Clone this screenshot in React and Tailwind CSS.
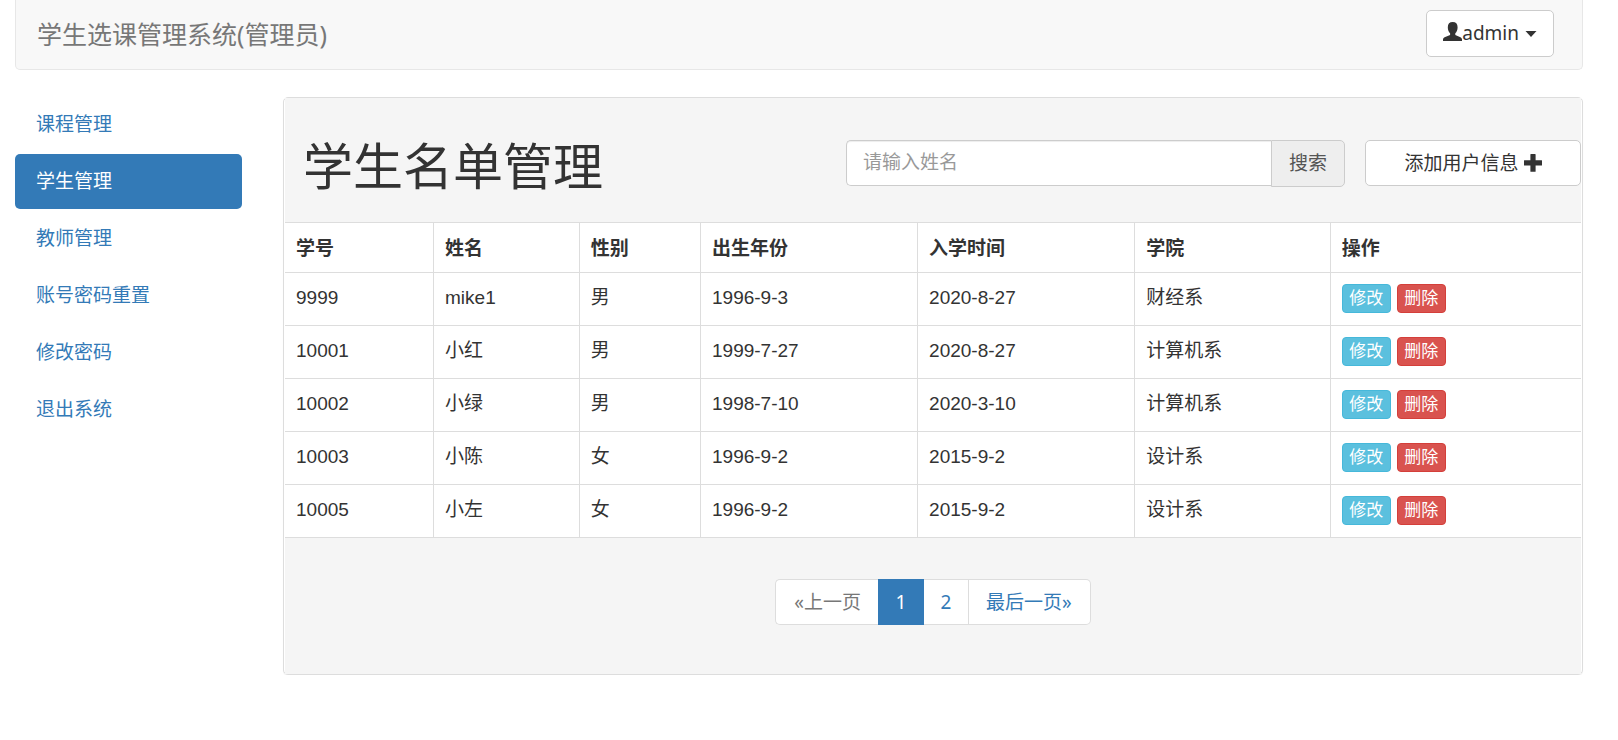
const NAV_ITEMS = ["课程管理", "学生管理", "教师管理", "账号密码重置", "修改密码", "退出系统"];

const COLUMNS = [
  { label: "学号", width: "w-[11.5%]" },
  { label: "姓名", width: "w-[11.25%]" },
  { label: "性别", width: "w-[9.35%]" },
  { label: "出生年份", width: "w-[16.75%]" },
  { label: "入学时间", width: "w-[16.75%]" },
  { label: "学院", width: "w-[15.1%]" },
  { label: "操作", width: "w-auto" },
];

const STUDENTS = [
  ["9999", "mike1", "男", "1996-9-3", "2020-8-27", "财经系"],
  ["10001", "小红", "男", "1999-7-27", "2020-8-27", "计算机系"],
  ["10002", "小绿", "男", "1998-7-10", "2020-3-10", "计算机系"],
  ["10003", "小陈", "女", "1996-9-2", "2015-9-2", "设计系"],
  ["10005", "小左", "女", "1996-9-2", "2015-9-2", "设计系"],
];

function UserIcon() {
  return (
    <svg viewBox="0 0 19 19" className="mb-1 h-[19px] w-[19px]" fill="currentColor" aria-hidden="true">
      <path d="M9.7 0C12.9 0 14.6 1.8 14.6 5.2C14.6 7.9 13.7 10 12.3 11.3V13L17.4 15.2C18.5 15.7 19 16.5 19 17.6V19H0V17.6C0 16.5.5 15.7 1.6 15.2L7.1 13V11.3C5.7 10 4.8 7.9 4.8 5.2C4.8 1.8 6.5 0 9.7 0Z" />
    </svg>
  );
}

function PlusIcon() {
  return (
    <svg viewBox="0 0 18 18" className="h-[18px] w-[18px]" fill="currentColor" aria-hidden="true">
      <path d="M6.8 0h4.4a.4.4 0 0 1 .4.4v5.8h6a.4.4 0 0 1 .4.4v4.6a.4.4 0 0 1-.4.4h-6v5.8a.4.4 0 0 1-.4.4H6.8a.4.4 0 0 1-.4-.4v-5.8h-6a.4.4 0 0 1-.4-.4V6.600a.4.4 0 0 1 .4-.4h6V.4A.4.4 0 0 1 6.800 0Z" />
    </svg>
  );
}

function Header() {
  return (
    <header className="flex h-[70px] items-start justify-between rounded-b-[5px] border border-t-0 border-[#e7e7e7] bg-[#f8f8f8] pt-2.5 pr-7 pl-[21px]">
      <a href="#" className="mt-1.5 font-['Noto_Sans','Noto_Sans_CJK_SC',sans-serif] text-[25px] leading-9 text-[#777]">
        学生选课管理系统(管理员)
      </a>
      <button
        type="button"
        className="flex h-[47px] items-center rounded-[5px] border border-[#ccc] bg-white px-4 font-['Noto_Sans',sans-serif]"
      >
        <UserIcon />
        admin
        <svg viewBox="0 0 12 6" className="ml-[6px] h-[6px] w-[12px]" fill="currentColor" aria-hidden="true">
          <path d="M.5 0h11L6 6Z" />
        </svg>
      </button>
    </header>
  );
}

function Sidebar() {
  return (
    <nav className="flex w-[227px] shrink-0 flex-col gap-0.5">
      {NAV_ITEMS.map((item) => (
        <a
          key={item}
          href="#"
          className={
            item === "学生管理"
              ? "rounded-[5px] bg-[#337ab7] px-[21px] py-[14px] text-white"
              : "rounded-[5px] px-[21px] py-[14px] text-[#337ab7]"
          }
        >
          {item}
        </a>
      ))}
    </nav>
  );
}

function PanelHeading() {
  return (
    <div className="flex h-[124px] items-start bg-[#f5f5f5] pl-[18px]">
      <h1 className="mt-10 flex-1 text-[50px] leading-[60px]">学生名单管理</h1>
      <form className="mt-[42px] flex w-[499px] items-start" onSubmit={(e) => e.preventDefault()}>
        <input
          type="text"
          aria-label="姓名"
          placeholder="请输入姓名"
          className="h-[46px] min-w-0 flex-1 rounded-l-[5px] border border-r-0 border-[#ccc] bg-white px-4 shadow-[inset_0_1px_1px_rgba(0,0,0,0.075)] outline-none placeholder:text-[#999]"
        />
        <button type="submit" className="h-[47px] rounded-r-[5px] border border-[#ccc] bg-[#eee] px-[17px] text-[#555]">
          搜索
        </button>
      </form>
      <button
        type="button"
        className="mt-[42px] ml-5 flex h-[46px] w-[216px] items-center justify-center gap-[5px] rounded-[5px] border border-[#ccc] bg-white"
      >
        添加用户信息
        <PlusIcon />
      </button>
    </div>
  );
}

function StudentTable() {
  return (
    <table className="w-full table-fixed border-separate border-spacing-0 border-t border-[#ddd] bg-white text-left">
      <thead>
        <tr>
          {COLUMNS.map((col) => (
            <th key={col.label} className={`${col.width} border-r border-b border-[#ddd] px-[11px] pt-3 pb-2.5 last:border-r-0`}>
              {col.label}
            </th>
          ))}
        </tr>
      </thead>
      <tbody>
        {STUDENTS.map((row) => (
          <tr key={row[0]}>
            {row.map((cell, i) => (
              <td key={i} className="h-[53px] border-r border-b border-[#ddd] px-[11px] pt-[11px] align-top">
                {cell}
              </td>
            ))}
            <td className="h-[53px] border-b border-[#ddd] px-[11px] pt-[11px] align-top">
              <div className="flex gap-1.5 text-[17px] leading-7 text-white">
                <button type="button" className="h-[29px] w-[49px] rounded-[4px] border border-[#46b8da] bg-[#5bc0de]">
                  修改
                </button>
                <button type="button" className="h-[29px] w-[49px] rounded-[4px] border border-[#d43f3a] bg-[#d9534f]">
                  删除
                </button>
              </div>
            </td>
          </tr>
        ))}
      </tbody>
    </table>
  );
}

function Pagination() {
  return (
    <nav className="flex justify-center bg-[#f5f5f5] pt-[41px] pb-[49px] font-['Noto_Sans','Noto_Sans_CJK_SC',sans-serif]">
      <a href="#" className="h-[46px] rounded-l-[5px] border border-r-0 border-[#ddd] bg-white pr-[17px] pl-[18px] leading-[44px] text-[#777]">
        «上一页
      </a>
      <a href="#" aria-current="page" className="h-[46px] w-[46px] border border-[#337ab7] bg-[#337ab7] text-center leading-[44px] text-white">
        1
      </a>
      <a href="#" className="h-[46px] w-[45px] border-y border-r border-[#ddd] bg-white text-center leading-[44px] text-[#337ab7]">
        2
      </a>
      <a href="#" className="h-[46px] rounded-r-[5px] border border-l-0 border-[#ddd] bg-white pr-[18px] pl-[17px] leading-[44px] text-[#337ab7]">
        最后一页»
      </a>
    </nav>
  );
}

export default function App() {
  return (
    <div className="pr-[35px] pl-[15px] font-['Liberation_Sans','Noto_Sans_CJK_SC',sans-serif] text-[19px] leading-[27px] text-[#333]">
      <Header />
      <div className="mt-[27px] flex items-start gap-[41px]">
        <Sidebar />
        <main className="min-w-0 flex-1 rounded-[5px] border border-[#ddd] bg-white px-px shadow-[0_1px_1px_rgba(0,0,0,0.05)]">
          <PanelHeading />
          <StudentTable />
          <Pagination />
        </main>
      </div>
    </div>
  );
}
